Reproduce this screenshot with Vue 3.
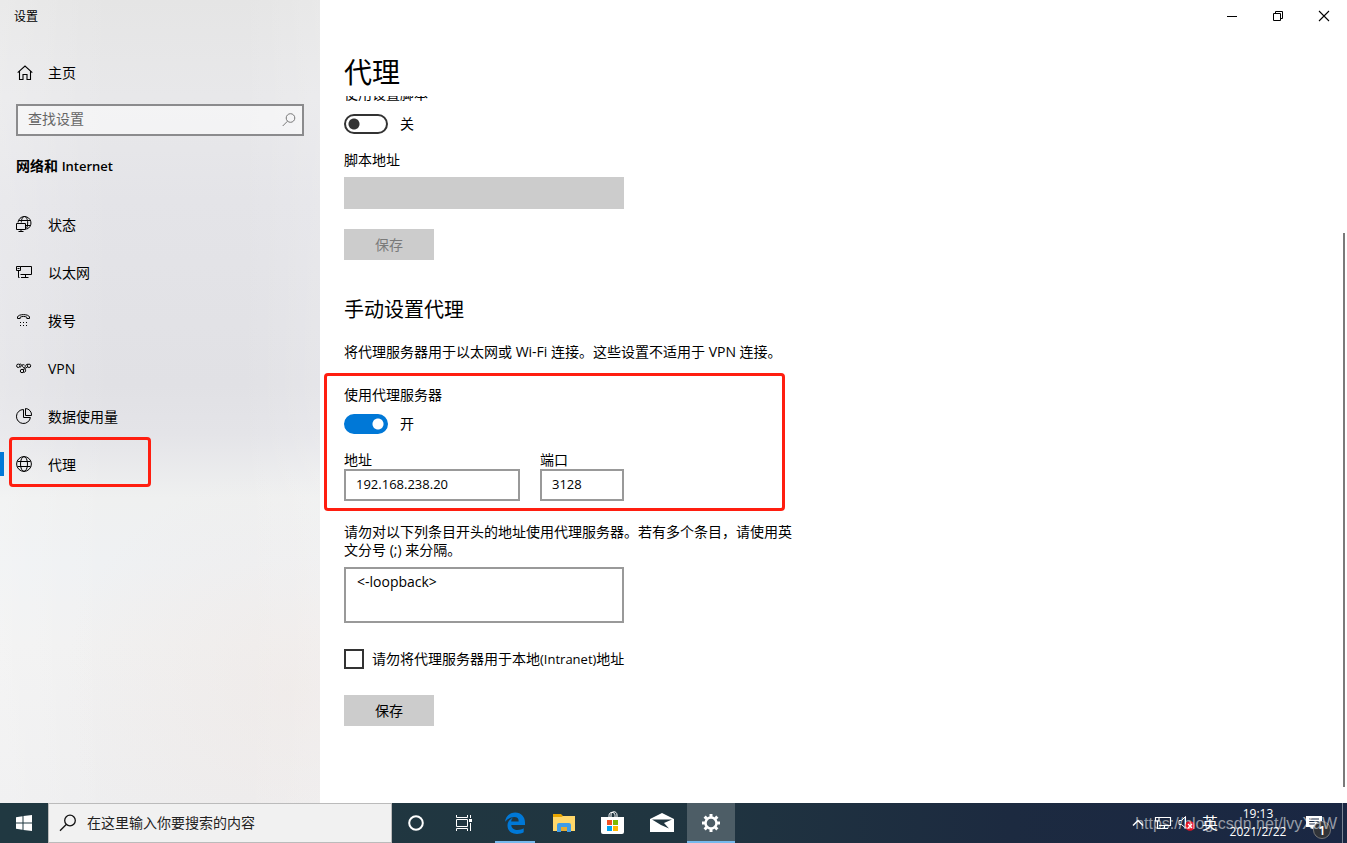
<script setup>
import { ref } from 'vue'

const navItems = [
  { id: 'status', label: '状态' },
  { id: 'ethernet', label: '以太网' },
  { id: 'dialup', label: '拨号' },
  { id: 'vpn', label: 'VPN' },
  { id: 'data', label: '数据使用量' },
  { id: 'proxy', label: '代理' },
]
const active = ref('proxy')
const useScript = ref(false)
const useProxy = ref(true)
const address = ref('192.168.238.20')
const port = ref('3128')
const exceptions = ref('<-loopback>')
const skipLocal = ref(false)
</script>

<template>
  <div class="desktop">
    <div class="window">
      <aside class="sidebar">
        <div class="app-title">设置</div>
        <a class="home" href="#home">
          <svg width="16" height="16" viewBox="0 0 16 16" fill="none" stroke="#000" stroke-width="1.1">
            <path d="M.7 7.6 8 1l7.300 6.600M2.500 6.200V14.500H6V9.500H10V14.500H13.500V6.200" />
          </svg>
          <span>主页</span>
        </a>
        <div class="find">
          <input type="text" placeholder="查找设置" aria-label="查找设置" />
          <svg width="14" height="14" viewBox="0 0 14 14" fill="none" stroke="#777" stroke-width="1">
            <circle cx="8.500" cy="5" r="4.300" />
            <path d="M5.500 8.200.7 13" />
          </svg>
        </div>
        <h2 class="category">网络和 <span class="latin">Internet</span></h2>
        <nav>
          <a
            v-for="item in navItems"
            :key="item.id"
            :href="'#' + item.id"
            class="nav-item"
            :class="{ active: active === item.id }"
            @click.prevent="active = item.id"
          >
            <svg width="16" height="16" viewBox="0 0 16 16" fill="none" stroke="#000" stroke-width="1">
              <g v-if="item.id === 'status'">
                <path d="M2 6.500A6.500 6.500 0 1 1 10.500 13.200M5.300 6.500C5.400 3 6.700.5 8.500.5s3.200 3 3.200 6.500c0 2-.3 3.800-1.200 5.500M3 4.500H14.500M10 9.500H14.300" />
                <path d="M.5 7.500H9.500V13.500H.5zM5 13.500V15.500M2.500 15.500H7.500" />
              </g>
              <g v-else-if="item.id === 'ethernet'">
                <path d="M4.500 2.500H15.500V10.500H4.500M9.500 10.500V13.500M5 13.500H12.500M.5 2.500H4.500V6.500H.5zM2.500 6.500V13.500H3.500M1.500 4.500H3.500" />
              </g>
              <g v-else-if="item.id === 'dialup'">
                <path d="M1.500 6.500V5C2.500 1.800 12.500 1.800 13.500 5V6.500H10.800V5.200C9 4.200 6 4.200 4.200 5.200V6.500Z" />
                <path d="M4 10.500H5M7 10.500H8M10 10.500H11M4 13.500H5M7 13.500H8M10 13.500H11" />
              </g>
              <g v-else-if="item.id === 'vpn'">
                <circle cx="2.300" cy="5.800" r="1.700" />
                <circle cx="13" cy="5.800" r="1.700" />
                <circle cx="6" cy="11" r="1.700" />
                <path d="M3.300 4.400C5 3.400 5.800 5 6.600 6.500S8.500 8.200 9.300 6.500 10.500 3.700 12 4.400M3.800 6.800C4.800 7.600 5.200 6 6 5.200S8 4.500 8.600 5.200M7 9.600 11.700 6.900M7.300 12.200C9.600 12.800 10.300 10.500 9 9" />
              </g>
              <g v-else-if="item.id === 'data'">
                <path d="M7.500 1.500A7 7 0 1 0 14.400 9.500H7.500Z" />
                <path d="M9.500.5A6.300 6.300 0 0 1 15.500 7.500H9.500Z" />
              </g>
              <g v-else>
                <circle cx="8" cy="8" r="7.400" />
                <ellipse cx="8" cy="8" rx="3.500" ry="7.400" />
                <path d="M1.500 5.500H14.500M1.500 10.500H14.500" />
              </g>
            </svg>
            <span>{{ item.label }}</span>
            <i v-if="item.id === 'proxy'" class="mark" />
          </a>
        </nav>
      </aside>

      <main class="main">
        <div class="controls">
          <button aria-label="最小化">
            <svg width="12" height="12" viewBox="0 0 12 12" stroke="#000"><path d="M1 6.500H11" /></svg>
          </button>
          <button aria-label="还原">
            <svg width="12" height="12" viewBox="0 0 12 12" fill="none" stroke="#000"><path d="M1.500 3.500H8.500V10.500H1.500zM3.500 3V1.500H10.500V8.500H9" /></svg>
          </button>
          <button aria-label="关闭">
            <svg width="12" height="12" viewBox="0 0 12 12" stroke="#000" stroke-width="1.1"><path d="M1 1 11 11M11 1 1 11" /></svg>
          </button>
        </div>
        <h1>代理</h1>
        <div class="viewport">
          <div class="content">
            <label class="line" for="script-switch">使用设置脚本</label>
            <div class="switch-row top">
              <input id="script-switch" v-model="useScript" class="switch" type="checkbox" role="switch" />
              <span>{{ useScript ? '开' : '关' }}</span>
            </div>
            <label class="line script-label" for="script-url">脚本地址</label>
            <input id="script-url" class="script-url" type="text" disabled />
            <button class="save" disabled>保存</button>

            <h2 class="section">手动设置代理</h2>
            <p class="about">将代理服务器用于以太网或 Wi-Fi 连接。这些设置不适用于 VPN 连接。</p>

            <div class="proxy-group">
              <label class="line" for="proxy-switch">使用代理服务器</label>
              <div class="switch-row">
                <input id="proxy-switch" v-model="useProxy" class="switch" type="checkbox" role="switch" />
                <span>{{ useProxy ? '开' : '关' }}</span>
              </div>
              <div class="fields">
                <div class="field address">
                  <label for="address">地址</label>
                  <input id="address" v-model="address" type="text" />
                </div>
                <div class="field port">
                  <label for="port">端口</label>
                  <input id="port" v-model="port" type="text" />
                </div>
              </div>
              <i class="mark" />
            </div>

            <label class="exceptions-label" for="exceptions">请勿对以下列条目开头的地址使用代理服务器。若有多个条目，请使用英文分号 (;) 来分隔。</label>
            <textarea id="exceptions" v-model="exceptions" />
            <div class="check-row">
              <input id="skip-local" v-model="skipLocal" type="checkbox" />
              <label for="skip-local">请勿将代理服务器用于本地<span class="latin">(Intranet)</span>地址</label>
            </div>
            <button class="save last">保存</button>
          </div>
        </div>
        <div class="scrollbar" />
      </main>
    </div>

    <footer class="taskbar">
      <button class="task" aria-label="开始">
        <svg width="16" height="16" viewBox="0 0 16 16" fill="#fff"><path d="M0 2.200 6.500 1.300V7.500H0zM7.500 1.100 16 0V7.500H7.500zM0 8.500H6.500V14.700L0 13.800zM7.500 8.500H16V16L7.500 14.900z" /></svg>
      </button>
      <div class="search">
        <svg width="18" height="18" viewBox="0 0 18 18" fill="none" stroke="#111" stroke-width="1.300">
          <circle cx="11" cy="6.500" r="5.300" />
          <path d="M7.200 10.500 1 16.800" />
        </svg>
        <input type="text" placeholder="在这里输入你要搜索的内容" aria-label="搜索" />
      </div>
      <button class="task" aria-label="Cortana">
        <svg width="16" height="16" viewBox="0 0 16 16" fill="none" stroke="#fff" stroke-width="2"><circle cx="8" cy="8" r="6.800" /></svg>
      </button>
      <button class="task" aria-label="任务视图">
        <svg width="18" height="16" viewBox="0 0 18 16" fill="none" stroke="#fff"><path d="M1.500 0V2.500H12.500V0M1.500 4.500H12.500V11.500H1.500zM1.500 16V13.500H12.500V16M15.500 0V3M15.500 8V16" /><path d="M14 4H17V7H14z" fill="#fff" stroke="none" /></svg>
      </button>
      <div class="apps">
        <button class="task open" aria-label="Edge">
          <svg width="22" height="22" viewBox="0 0 22 22" fill="#0078d7"><path d="M1 9.800C1.700 4.300 5.600.4 11.200.4 17.300.4 21 4.700 21 10.600V13H7.300C7.500 16.300 10.100 18 13.600 18 16.100 18 18.100 17.300 19.700 16.300V20.200C17.900 21.300 15.600 21.900 13 21.900 7.100 21.900 3.500 18.500 3.500 13.500 3.500 9.900 5.700 7 9 5.700 7.800 6.800 7.300 8.200 7.200 9.400H14.700C14.700 6.600 13.200 5.100 10.300 5.100 6.600 5.100 3.300 7 1 9.800Z" /></svg>
        </button>
        <button class="task" aria-label="文件资源管理器">
          <svg width="22" height="18" viewBox="0 0 22 18"><path d="M0 0H8L10 2H21V17H0z" fill="#e8a500" /><path d="M0 3H8.500L10 2H22V17H0z" fill="#ffd76a" /><path d="M4 18V11Q4 9 6 9H16Q18 9 18 11V18H14V13H8V18z" fill="#3f9ce8" /><path d="M8 13H14V17H8z" fill="#e5ac32" /></svg>
        </button>
        <button class="task" aria-label="应用商店">
          <svg width="24" height="24" viewBox="0 0 24 24"><path d="M8 7V4.500C8 .3 14 .3 14 4.500V7M10 7V4C10-.3 16-.3 16 4V7" fill="none" stroke="#fff" /><path d="M0 6H23V21Q23 23 21 23H2Q0 23 0 21z" fill="#fff" /><path d="M6 9H11V14H6z" fill="#f25022" /><path d="M12 9H17V14H12z" fill="#7fba00" /><path d="M6 15H11V20H6z" fill="#00a4ef" /><path d="M12 15H17V20H12z" fill="#ffb900" /></svg>
        </button>
        <button class="task" aria-label="邮件">
          <svg width="24" height="20" viewBox="0 0 24 20"><path d="M0 6 12 0 24 6V19H0z" fill="#fff" /><path d="M2 6.500H22L14 10 19 15.500 11 12z" fill="#203640" /></svg>
        </button>
        <button class="task open current" aria-label="设置">
          <svg width="20" height="20" viewBox="-10 -10 20 20" fill="none" stroke="#fff">
            <circle r="5.500" stroke-width="2.500" />
            <path v-for="n in 8" :key="n" d="M0-6V-9" stroke-width="3" :transform="`rotate(${n * 45})`" />
          </svg>
        </button>
      </div>
      <div class="tray">
        <svg class="chevron" width="12" height="8" viewBox="0 0 12 8" fill="none" stroke="#fff" stroke-width="1.500"><path d="M1 6.500 6 1.500 11 6.500" /></svg>
        <svg width="18" height="14" viewBox="0 0 18 14" fill="none" stroke="#fff" stroke-width="1.200"><path d="M5 1.500H16.500V9.500H5M10.500 9.500V12.500M6 12.500H14M1.500 1.500H5V5H1.500zM3.500 5V12.500H6" /></svg>
        <svg width="18" height="16" viewBox="0 0 18 16"><path d="M1 5.500H3.500L7.500 1.500V13L3.500 9.500H1z" fill="none" stroke="#fff" /><circle cx="12" cy="11" r="4.800" fill="#e81123" /><path d="M10 9 14 13M14 9 10 13" stroke="#fff" stroke-width="1.200" /></svg>
        <span class="ime">英</span>
        <div class="clock"><span>19:13</span><span>2021/2/22</span></div>
        <button class="notices" aria-label="通知">
          <svg width="16" height="16" viewBox="0 0 16 16"><path d="M0 1H16V12H8V15L4 12H0z" fill="#fff" /><path d="M3 4H13M3 6.500H13M3 9H9" stroke="#1b2942" /></svg>
          <span class="badge">1</span>
        </button>
        <i class="peek" />
        <span class="watermark">https://blog.csdn.net/lvyXaW</span>
      </div>
    </footer>
  </div>
</template>

<style>
body {
  margin: 0;
}
</style>

<style scoped>
.desktop,
.desktop * {
  box-sizing: border-box;
}
.desktop {
  display: flex;
  flex-direction: column;
  height: 100vh;
  font-family: "Open Sans", "Noto Sans CJK SC", sans-serif;
  font-size: 14px;
  line-height: 20px;
  color: #000;
}
h1,
h2,
p {
  margin: 0;
  font-weight: 400;
}
button,
input,
textarea {
  font: inherit;
  color: inherit;
  margin: 0;
  border-radius: 0;
  outline: none;
}
button {
  border: 0;
  padding: 0;
  background: none;
}
svg {
  display: block;
  flex: none;
}
.latin {
  font-size: 13px;
}
.window {
  flex: 1;
  min-height: 0;
  display: flex;
  background: #fff;
}
.sidebar {
  width: 320px;
  flex: none;
  background:
    radial-gradient(circle at 90% 86%, rgba(238, 228, 224, 0.4), transparent 30%),
    linear-gradient(90deg, rgba(255, 255, 255, 0.2), transparent 35% 75%, rgba(255, 255, 255, 0.15)),
    linear-gradient(#e5e5e5, #e8e8ea 12%, #e4e4e8 25%, #e1e1e5 48%, #e4e4e8 54%, #eff0f0 62%, #eff1f3 70%, #f1f1f1 80%, #eeeeef);
}
.app-title {
  height: 32px;
  padding: 2px 0 0 14px;
  font-size: 12px;
  line-height: 30px;
}
.home,
.nav-item {
  position: relative;
  display: flex;
  align-items: center;
  gap: 16px;
  height: 48px;
  padding-left: 16px;
  color: inherit;
  text-decoration: none;
}
.nav-item svg {
  margin-bottom: 2px;
}
.home {
  margin-top: 17px;
}
.home svg {
  margin: 0 0 0 1px;
}
.home {
  gap: 15px;
}
.find {
  display: flex;
  align-items: center;
  height: 32px;
  margin: 7px 16px 0;
  padding: 0 6px 0 10px;
  border: 2px solid #8b8b8d;
  background: rgba(255, 255, 255, 0.5);
}
.find input,
.search input {
  flex: 1;
  min-width: 0;
  padding: 0;
  border: 0;
  background: none;
}
.find input {
  padding-bottom: 2px;
}
.find input::placeholder {
  color: #666;
  opacity: 1;
}
.category {
  margin: 20px 0 25px 16px;
  font-size: 14px;
  line-height: 20px;
  font-weight: 600;
}
.nav-item.active::before {
  content: "";
  position: absolute;
  left: 0;
  top: 11px;
  width: 4px;
  height: 24px;
  background: #0078d7;
}
.mark {
  position: absolute;
  border: 3px solid #ff1e10;
  border-radius: 4px;
  pointer-events: none;
}
.nav-item .mark {
  left: 9px;
  top: -4px;
  width: 142px;
  height: 50px;
}
.main {
  position: relative;
  flex: 1;
  min-width: 0;
  display: flex;
  flex-direction: column;
}
.controls {
  display: flex;
  justify-content: flex-end;
}
.controls button {
  display: grid;
  place-items: center;
  width: 46px;
  height: 32px;
}
h1 {
  margin: 20px 0 4px;
  padding-left: 24px;
  font-size: 28px;
  line-height: 40px;
}
.viewport {
  flex: 1;
  min-height: 0;
  padding-left: 24px;
  overflow: hidden;
}
.content {
  margin-top: -12px;
  display: flex;
  flex-direction: column;
  align-items: flex-start;
}
.line {
  display: block;
}
.switch-row {
  display: flex;
  align-items: center;
  gap: 12px;
  margin-top: 9px;
}
.switch-row.top {
  margin-top: 10px;
}
.switch {
  appearance: none;
  width: 44px;
  height: 20px;
  border: 2px solid #333;
  border-radius: 10px;
  background: radial-gradient(circle at 8px 8px, #333 5px, transparent 6px);
}
.switch:checked {
  border-color: #0078d7;
  background: radial-gradient(circle at 32px 8px, #fff 5px, #0078d7 6px);
}
.script-label {
  margin-top: 16px;
}
.script-url {
  width: 280px;
  height: 32px;
  margin-top: 7px;
  border: 0;
  background: #ccc;
}
.save {
  width: 90px;
  height: 31px;
  margin-top: 20px;
  background: #ccc;
}
.save:disabled {
  color: #7a7a7a;
}
.save.last {
  margin-top: 26px;
}
.section {
  margin-top: 36px;
  font-size: 20px;
  line-height: 28px;
}
.about {
  margin-top: 18px;
}
.proxy-group {
  position: relative;
  margin-top: 23px;
}
.proxy-group .mark {
  left: -20px;
  top: -12px;
  width: 461px;
  height: 138px;
}
.fields {
  display: flex;
  gap: 20px;
  margin-top: 17px;
}
.field {
  display: flex;
  flex-direction: column;
  line-height: 18px;
}
.field input {
  width: 100%;
  height: 32px;
  padding: 0 10px 2px;
  border: 2px solid #999;
  font-size: 13px;
}
.address {
  width: 176px;
}
.port {
  width: 84px;
}
.exceptions-label {
  max-width: 452px;
  margin-top: 22px;
  line-height: 18px;
}
textarea {
  display: block;
  width: 280px;
  height: 56px;
  margin-top: 8px;
  padding: 4px 11px;
  border: 2px solid #999;
  line-height: 18px;
  resize: none;
}
.check-row {
  display: flex;
  align-items: center;
  gap: 8px;
  margin-top: 26px;
}
.check-row input {
  appearance: none;
  width: 20px;
  height: 20px;
  border: 2px solid #333;
  background: #fff;
}
.check-row input:checked {
  background: #0078d7;
}
.scrollbar {
  position: absolute;
  right: 2px;
  top: 233px;
  bottom: 16px;
  width: 2px;
  background: #7a7a7a;
}
.taskbar {
  display: flex;
  height: 40px;
  flex: none;
  background: linear-gradient(90deg, #203841, #203540 50%, #1c2a40 75%, #1a2743);
}
.task {
  position: relative;
  display: grid;
  place-items: center;
  width: 48px;
  height: 40px;
}
.search {
  display: flex;
  align-items: center;
  gap: 10px;
  width: 344px;
  padding-left: 10px;
  border: 1px solid #bbb;
  background: #f1f1f1;
}
.search input::placeholder {
  color: #222;
  opacity: 1;
}
.apps {
  display: flex;
  gap: 1px;
  margin-left: 3px;
}
.open::after {
  content: "";
  position: absolute;
  left: 4px;
  right: 4px;
  bottom: 0;
  height: 2px;
  background: #76b9ed;
}
.current {
  background: #4d5d66;
}
.current::after {
  left: 0;
  right: 0;
}
.tray {
  position: relative;
  display: flex;
  align-items: center;
  gap: 6px;
  margin-left: auto;
  color: #fff;
}
.chevron {
  margin-right: 4px;
}
.ime {
  font-size: 16px;
}
.clock {
  display: flex;
  flex-direction: column;
  width: 68px;
  font-size: 12px;
  line-height: 18px;
  text-align: center;
}
.notices {
  position: relative;
  width: 44px;
  height: 40px;
  padding-left: 8px;
  color: #fff;
}
.badge {
  position: absolute;
  left: 15px;
  top: 18px;
  width: 18px;
  height: 18px;
  border: 1px solid #777;
  border-radius: 50%;
  background: #303338;
  font-size: 13px;
  line-height: 16px;
  font-weight: 600;
  text-align: center;
}
.peek {
  align-self: stretch;
  width: 5px;
  margin-left: -6px;
  border-left: 1px solid #7b8494;
}
.watermark {
  position: absolute;
  right: 10px;
  top: 11px;
  font-family: "Liberation Sans", sans-serif;
  font-size: 16px;
  color: rgba(255, 255, 255, 0.55);
  white-space: nowrap;
  pointer-events: none;
}
</style>
